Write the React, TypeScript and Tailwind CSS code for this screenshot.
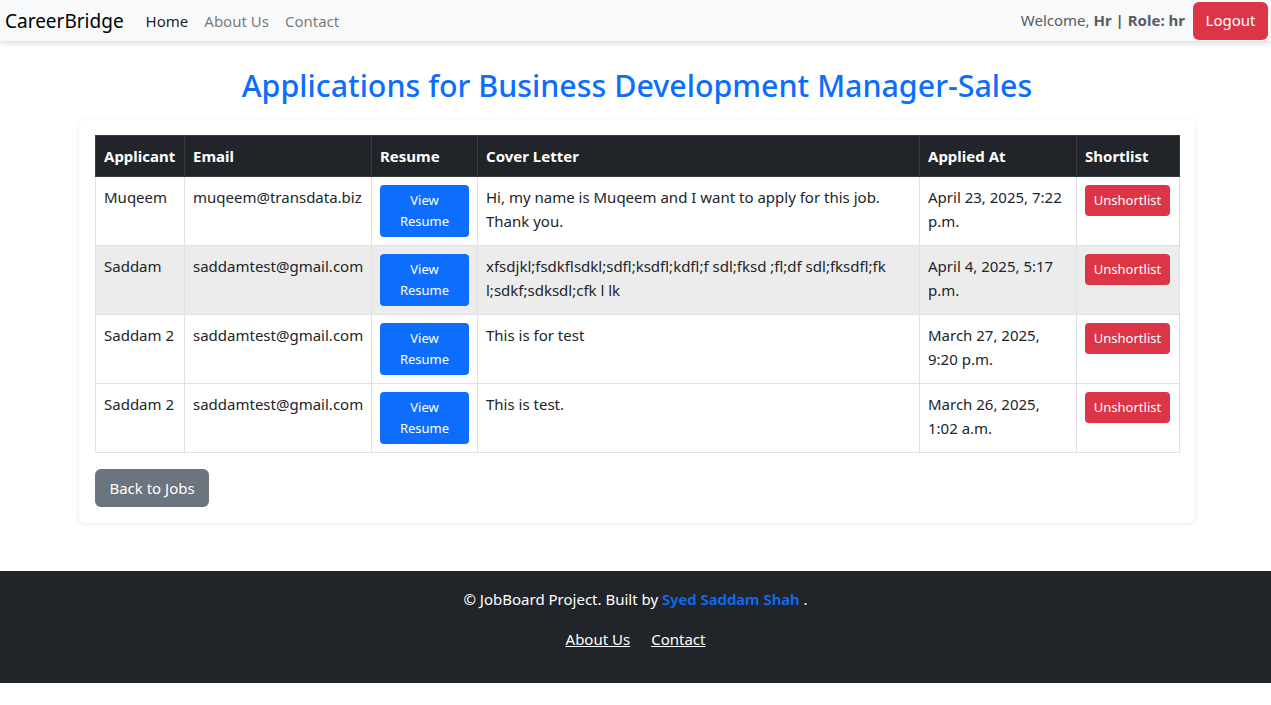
import React from 'react'

const rows = [
  {
    name: 'Muqeem',
    email: 'muqeem@transdata.biz',
    cover: 'Hi, my name is Muqeem and I want to apply for this job. Thank you.',
    applied: 'April 23, 2025, 7:22 p.m.',
  },
  {
    name: 'Saddam',
    email: 'saddamtest@gmail.com',
    cover: 'xfsdjkl;fsdkflsdkl;sdfl;ksdfl;kdfl;f sdl;fksd ;fl;df sdl;fksdfl;fk l;sdkf;sdksdl;cfk l lk',
    applied: 'April 4, 2025, 5:17 p.m.',
    hover: true,
  },
  {
    name: 'Saddam 2',
    email: 'saddamtest@gmail.com',
    cover: 'This is for test',
    applied: 'March 27, 2025, 9:20 p.m.',
  },
  {
    name: 'Saddam 2',
    email: 'saddamtest@gmail.com',
    cover: 'This is test.',
    applied: 'March 26, 2025, 1:02 a.m.',
  },
]

const font = "font-['Noto_Sans','Liberation_Sans',sans-serif]"

function Navbar() {
  return (
    <nav className="relative z-10 flex h-[41px] items-center justify-between bg-[#f8f9fa] pl-[5px] pr-[3px] shadow-[0_2px_6px_rgba(0,0,0,0.15)]">
      <div className="flex items-center">
        <span className="text-[19px] leading-[30px] text-black">CareerBridge</span>
        <ul className="ml-[14px] flex items-center text-[15px] leading-6">
          <li className="px-[8px] text-black/90">Home</li>
          <li className="px-[8px] text-black/55">About Us</li>
          <li className="px-[8px] text-black/55">Contact</li>
        </ul>
      </div>
      <div className="flex items-center">
        <span className="mr-[8px] text-[15px] text-[#595c5f]">
          Welcome, <b className="font-bold">Hr</b> <b className="font-bold">| Role: hr</b>
        </span>
        <button className="h-[38px] w-[75px] rounded-[6px] bg-[#dc3545] text-[15px] text-white">Logout</button>
      </div>
    </nav>
  )
}

export default function App() {
  return (
    <div className={`${font} bg-white text-[#212529]`}>
      <Navbar />
      <main className="ml-[67px] w-[1140px] px-[12px] pt-[26px]">
        <h2 className="mb-[14px] text-center text-[30.4px] font-medium leading-[38px] text-[#0d6efd]">
          Applications for Business Development Manager-Sales
        </h2>
        <div className="rounded-[6px] bg-white p-[16px] shadow-[0_1px_4px_rgba(0,0,0,0.1)]">
          <table className="w-full table-fixed border-collapse text-[15px] leading-6">
            <colgroup>
              <col className="w-[89px]" />
              <col className="w-[187px]" />
              <col className="w-[106px]" />
              <col className="w-[442px]" />
              <col className="w-[157px]" />
              <col className="w-[103px]" />
            </colgroup>
            <thead>
              <tr className="bg-[#212529] text-left text-white">
                {['Applicant', 'Email', 'Resume', 'Cover Letter', 'Applied At', 'Shortlist'].map((h) => (
                  <th key={h} className="border border-[#373b3e] px-[8px] py-[8px] font-bold">
                    {h}
                  </th>
                ))}
              </tr>
            </thead>
            <tbody>
              {rows.map((r, i) => (
                <tr key={i} className={r.hover ? 'bg-[#ececec]' : 'bg-white'}>
                  <td className="border border-[#dee2e6] p-[8px] align-top">{r.name}</td>
                  <td className="border border-[#dee2e6] p-[8px] align-top">{r.email}</td>
                  <td className="border border-[#dee2e6] p-[8px] align-top">
                    <button className="w-[89px] rounded-[4px] bg-[#0d6efd] px-[8px] py-[5px] text-[13px] leading-[21px] text-white">
                      View Resume
                    </button>
                  </td>
                  <td className="border border-[#dee2e6] p-[8px] align-top break-words">{r.cover}</td>
                  <td className="border border-[#dee2e6] p-[8px] align-top">{r.applied}</td>
                  <td className="border border-[#dee2e6] p-[8px] align-top">
                    <button className="w-[85px] rounded-[4px] bg-[#dc3545] py-[5px] text-[13px] leading-[21px] text-white">
                      Unshortlist
                    </button>
                  </td>
                </tr>
              ))}
            </tbody>
          </table>
          <button className="mt-[16px] h-[38px] w-[114px] rounded-[6px] bg-[#6c757d] text-[15px] text-white">
            Back to Jobs
          </button>
        </div>
      </main>
      <footer className="mt-[48px] bg-[#212529] pt-[16px] pb-[32px] text-center text-[15px] leading-6 text-white">
        <p className="mb-[16px]">
          © JobBoard Project. Built by{' '}
          <span className="font-semibold text-[#0d6efd]">Syed Saddam Shah</span> .
        </p>
        <div className="flex justify-center gap-[21px]">
          <span className="underline">About Us</span>
          <span className="underline">Contact</span>
        </div>
      </footer>
    </div>
  )
}
